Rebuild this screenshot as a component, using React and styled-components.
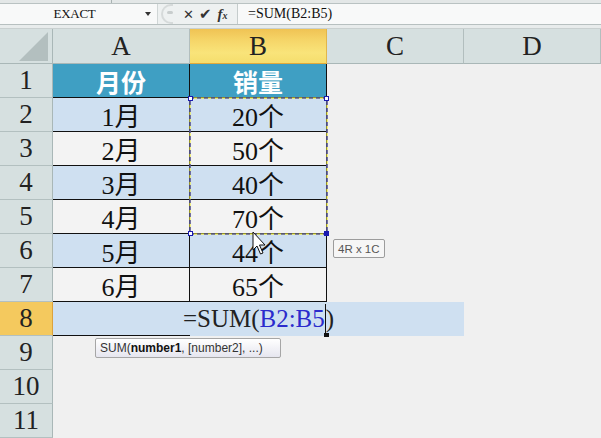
import React from "react";
import styled, { createGlobalStyle } from "styled-components";

const GlobalStyle = createGlobalStyle`
  html, body {
    margin: 0;
    padding: 0;
    background: #f0f0f0;
  }
`;

const SERIF = `"Liberation Serif", "Noto Sans CJK SC", serif`;

const columns = ["A", "B", "C", "D"];
const data = [
  ["1月", "20个"],
  ["2月", "50个"],
  ["3月", "40个"],
  ["4月", "70个"],
  ["5月", "44个"],
  ["6月", "65个"],
];

const App = () => {
  return (
    <>
      <GlobalStyle />
      <Window>
        <TopStrip>
          <div className="strip__left" />
        </TopStrip>
        <FormulaBar>
          <NameBox>
            <span>EXACT</span>
            <DropArrow />
          </NameBox>
          <Controls>
            <Grip />
            <ControlIcon>✕</ControlIcon>
            <ControlIcon $big>✔</ControlIcon>
            <FxIcon>
              f<sub>x</sub>
            </FxIcon>
          </Controls>
          <FormulaInput>=SUM(B2:B5)</FormulaInput>
        </FormulaBar>
        <BarGap />
        <Sheet>
          <Corner>
            <svg width="32" height="32" viewBox="0 0 32 32">
              <polygon points="31,2 31,31 2,31" fill="#b3bfbf" />
            </svg>
          </Corner>
          {columns.map((c) => (
            <ColHead key={c} $active={c === "B"}>
              {c}
            </ColHead>
          ))}

          <RowHead>1</RowHead>
          <Cell $tone="head" $bordered>
            月份
          </Cell>
          <Cell $tone="head" $bordered>
            销量
          </Cell>
          <Cell />
          <Cell />

          {data.map(([month, amount], i) => {
            const tone = i % 2 === 0 ? "blue" : "light";
            return (
              <React.Fragment key={month}>
                <RowHead>{i + 2}</RowHead>
                <Cell $tone={tone} $bordered>
                  {month}
                </Cell>
                <Cell $tone={tone} $bordered>
                  {amount}
                </Cell>
                <Cell />
                <Cell />
              </React.Fragment>
            );
          })}

          <RowHead $active>8</RowHead>
          <EditCell>
            =SUM(<RefText>B2:B5</RefText>
            <Caret />)
          </EditCell>
          <Cell />

          {[9, 10, 11].map((n) => (
            <React.Fragment key={n}>
              <RowHead>{n}</RowHead>
              <Cell />
              <Cell />
              <Cell />
              <Cell />
            </React.Fragment>
          ))}

          <MarchingAnts width="141" height="140" viewBox="0 0 141 140">
            <rect x="2" y="2" width="137" height="136" fill="none" stroke="#f4ef3a" strokeWidth="1.2" />
            <rect
              x="2"
              y="2"
              width="137"
              height="136"
              fill="none"
              stroke="#1b1bb0"
              strokeWidth="1.2"
              strokeDasharray="4 3"
            />
            <rect x="0.5" y="0.5" width="4" height="4" fill="#fff" stroke="#1b1bb0" />
            <rect x="136.5" y="0.5" width="4" height="4" fill="#fff" stroke="#1b1bb0" />
            <rect x="0.5" y="135.5" width="4" height="4" fill="#fff" stroke="#1b1bb0" />
            <rect x="136.5" y="135.5" width="4" height="4" fill="#1b1bb0" stroke="#1b1bb0" />
          </MarchingAnts>

          <FillHandle />

          <Pointer width="16" height="26" viewBox="0 0 16 26">
            <path
              d="M1 1 L1 19 L5 15 L8.5 23 L11 22 L7.5 14 L13 14 Z"
              fill="#fff"
              stroke="#111"
              strokeWidth="1"
              strokeLinejoin="miter"
            />
          </Pointer>

          <SizeTip>4R x 1C</SizeTip>

          <FuncTip>
            SUM(<b>number1</b>, [number2], ...)
          </FuncTip>
        </Sheet>
      </Window>
    </>
  );
};

const Window = styled.div`
  width: 601px;
  height: 438px;
  overflow: hidden;
  display: flex;
  flex-direction: column;
  background: #f0f0f0;
`;

const TopStrip = styled.div`
  height: 3px;
  background: #e3e7e7;
  border-bottom: 1px solid #b9c2c2;
  display: flex;
  .strip__left {
    width: 111px;
    border-right: 1px solid #a9b3b3;
  }
`;

const FormulaBar = styled.div`
  height: 22px;
  display: flex;
  background: #eef1f1;
  border-bottom: 1px solid #b7c0c0;
  box-sizing: border-box;
`;

const NameBox = styled.div`
  width: 157px;
  display: flex;
  align-items: center;
  background: #f8f9f9;
  border-right: 1px solid #d0d6d6;
  font-family: ${SERIF};
  font-size: 13px;
  letter-spacing: -0.3px;
  color: #111;
  span {
    flex: 1;
    text-align: center;
    padding-left: 4px;
  }
`;

const DropArrow = styled.div`
  width: 0;
  height: 0;
  margin-right: 6px;
  border-left: 3.5px solid transparent;
  border-right: 3.5px solid transparent;
  border-top: 4px solid #333;
`;

const Controls = styled.div`
  width: 79px;
  display: flex;
  align-items: center;
  border-right: 1px solid #c5cccc;
  background: #eef1f1;
`;

const Grip = styled.div`
  width: 10px;
  height: 16px;
  margin-left: 3px;
  border: 2px solid #d6dada;
  border-right: none;
  border-radius: 10px 0 0 10px;
  position: relative;
  &::after {
    content: "";
    position: absolute;
    left: 4px;
    top: 5px;
    width: 6px;
    height: 3px;
    border-radius: 3px;
    background: #c8cdcd;
  }
`;

const ControlIcon = styled.span`
  margin-left: ${(p) => (p.$big ? "5px" : "10px")};
  font-family: "DejaVu Sans", sans-serif;
  font-size: ${(p) => (p.$big ? "15px" : "13px")};
  font-weight: bold;
  color: #333;
  line-height: 1;
`;

const FxIcon = styled.span`
  margin-left: 6px;
  font-family: ${SERIF};
  font-style: italic;
  font-weight: bold;
  font-size: 15px;
  color: #333;
  sub {
    font-size: 10px;
    vertical-align: 0;
  }
`;

const FormulaInput = styled.div`
  flex: 1;
  display: flex;
  align-items: center;
  padding-left: 10px;
  background: #f8f9f9;
  font-family: ${SERIF};
  font-size: 14px;
  color: #111;
`;

const BarGap = styled.div`
  height: 3px;
  background: #e8ecec;
  border-bottom: 1px solid #c9d0d0;
`;

const Sheet = styled.div`
  position: relative;
  display: grid;
  grid-template-columns: 53px 137px 137px 137px 137px;
  grid-template-rows: 35px;
  grid-auto-rows: 34px;
  font-family: ${SERIF};
`;

const Corner = styled.div`
  background: #d6e0e0;
  border-right: 1px solid #a9b7b7;
  border-bottom: 1px solid #a9b7b7;
  display: flex;
  align-items: flex-end;
  justify-content: flex-end;
  padding: 0 3px 1px 0;
  box-sizing: border-box;
`;

const ColHead = styled.div`
  display: flex;
  align-items: center;
  justify-content: center;
  font-size: 27px;
  color: #222;
  box-sizing: border-box;
  border-right: 1px solid ${(p) => (p.$active ? "#e2b64a" : "#b2bebe")};
  border-bottom: 1px solid ${(p) => (p.$active ? "#e0a93a" : "#a9b7b7")};
  background: ${(p) =>
    p.$active
      ? "linear-gradient(#f0c354 0%, #f6d669 35%, #f9e47a 70%, #f5dd6c 100%)"
      : "#d6e0e0"};
`;

const RowHead = styled.div`
  display: flex;
  align-items: center;
  justify-content: center;
  font-size: 27px;
  color: #222;
  box-sizing: border-box;
  border-right: 1px solid ${(p) => (p.$active ? "#dca23c" : "#a9b7b7")};
  border-bottom: 1px solid #b3c0c0;
  background: ${(p) => (p.$active ? "#f4c95e" : "#d6e0e0")};
`;

const tones = {
  head: "#3f9fc3",
  blue: "#cfe0f1",
  light: "#f3f3f3",
};

const Cell = styled.div`
  display: flex;
  align-items: center;
  justify-content: center;
  box-sizing: border-box;
  font-size: ${(p) => (p.$tone === "head" ? "25px" : "26px")};
  font-weight: ${(p) => (p.$tone === "head" ? 700 : 400)};
  font-family: ${(p) =>
    p.$tone === "head" ? `"Noto Sans CJK SC", sans-serif` : SERIF};
  color: ${(p) => (p.$tone === "head" ? "#fff" : "#111")};
  background: ${(p) => tones[p.$tone] || "#f0f0f0"};
  border-right: ${(p) => (p.$bordered ? "1px solid #111" : "none")};
  border-bottom: ${(p) => (p.$bordered ? "1px solid #111" : "none")};
`;

const EditCell = styled.div`
  grid-column: span 3;
  position: relative;
  display: flex;
  align-items: center;
  justify-content: center;
  background: #cfe0f1;
  font-family: ${SERIF};
  font-size: 25px;
  color: #222;
  &::after {
    content: "";
    position: absolute;
    left: 0;
    bottom: 0;
    width: 137px;
    border-bottom: 1px solid #111;
  }
`;

const RefText = styled.span`
  color: #2b2bcc;
`;

const Caret = styled.span`
  display: inline-block;
  width: 0;
  height: 30px;
  border-left: 1px solid #111;
`;

const MarchingAnts = styled.svg`
  position: absolute;
  left: 188px;
  top: 67px;
`;

const FillHandle = styled.div`
  position: absolute;
  left: 324px;
  top: 304px;
  width: 5px;
  height: 4px;
  background: #111;
`;

const Pointer = styled.svg`
  position: absolute;
  left: 252px;
  top: 202px;
`;

const SizeTip = styled.div`
  position: absolute;
  left: 333px;
  top: 210px;
  height: 19px;
  padding: 0 4px;
  display: flex;
  align-items: center;
  box-sizing: border-box;
  border: 1px solid #9c9c9c;
  border-radius: 2px;
  background: #f6f6f6;
  font-family: "Liberation Sans", sans-serif;
  font-size: 11.5px;
  color: #555;
`;

const FuncTip = styled.div`
  position: absolute;
  left: 95px;
  top: 309px;
  width: 186px;
  height: 20px;
  padding: 0 4px;
  display: flex;
  align-items: center;
  box-sizing: border-box;
  white-space: pre;
  border: 1px solid #a6a6a6;
  border-radius: 2px;
  background: linear-gradient(#ffffff, #e6e6ef);
  font-family: "Liberation Sans", sans-serif;
  font-size: 12px;
  color: #333;
  b {
    color: #111;
  }
`;

export default App;
